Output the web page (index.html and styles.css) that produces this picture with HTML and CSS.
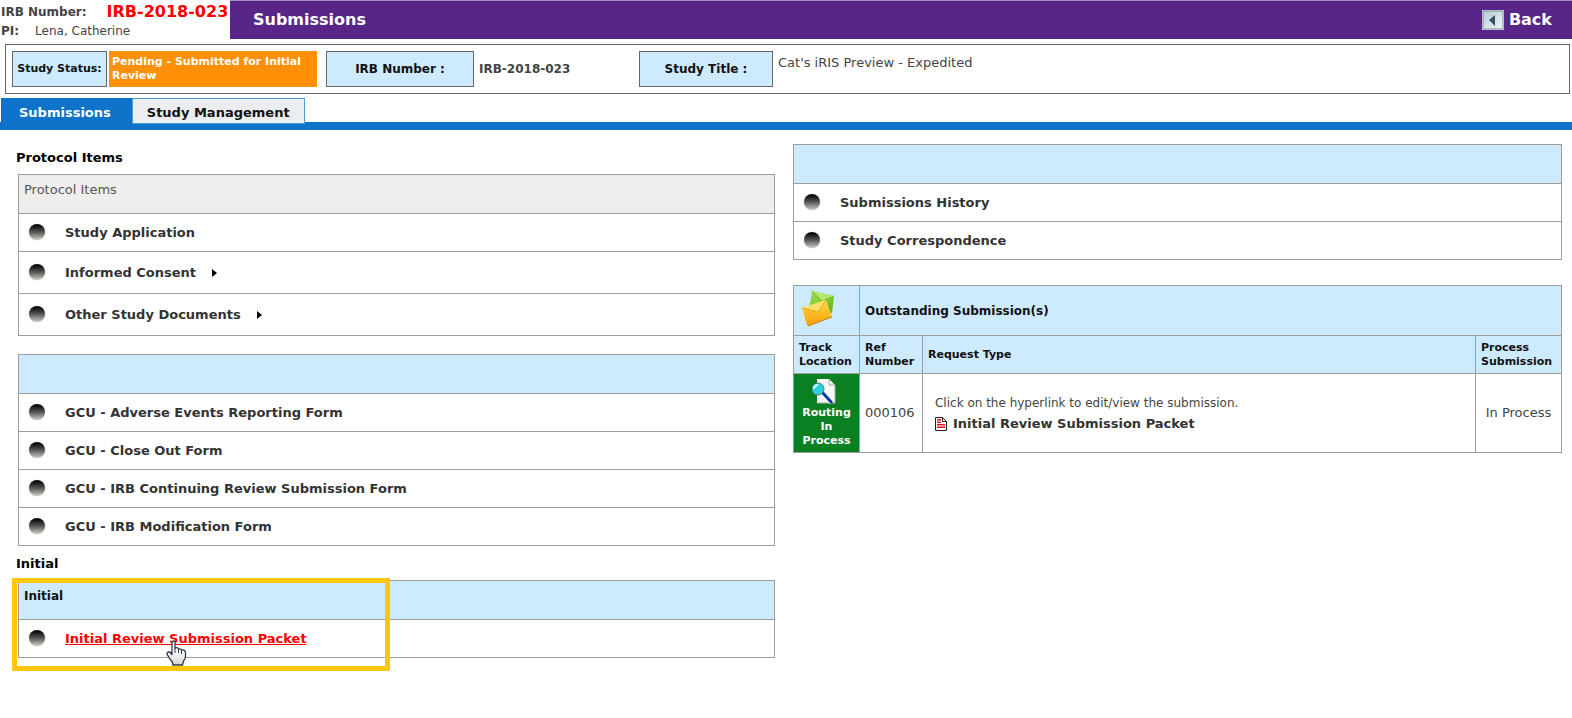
FILE: index.html
```html
<!DOCTYPE html>
<html lang="en">
<head>
    <meta charset="UTF-8">
    <meta name="viewport" content="width=device-width, initial-scale=1.0">
    <title>Submissions</title>
    <link rel="stylesheet" href="styles.css">
</head>
<body>
    <header class="top">
        <div class="study-id">
            <div class="id-row"><b>IRB Number:</b><span class="irb">IRB-2018-023</span></div>
            <div class="pi-row"><b>PI:</b><span>Lena, Catherine</span></div>
        </div>
        <div class="title-bar">
            <h1>Submissions</h1>
            <a href="#" class="back">
                <svg width="22" height="20" viewBox="0 0 22 20">
                    <defs>
                        <linearGradient id="btn" x1="0" y1="0" x2="1" y2="1">
                            <stop offset="0" stop-color="#b5cbd3"/>
                            <stop offset="1" stop-color="#eff8f8"/>
                        </linearGradient>
                    </defs>
                    <rect x="0" y="0" width="22" height="20" fill="#f2f2f2"/>
                    <rect x="1" y="1" width="20" height="18" fill="url(#btn)" stroke="#7c8790"/>
                    <path d="M13 5v11L7 10z" fill="#34506a"/>
                </svg>
                Back
            </a>
        </div>
    </header>

    <section class="info">
        <div class="label status-label">Study Status:</div>
        <div class="status">Pending - Submitted for Initial Review</div>
        <div class="label number-label">IRB Number :</div>
        <div class="number">IRB-2018-023</div>
        <div class="label title-label">Study Title :</div>
        <div class="study-title">Cat's iRIS Preview - Expedited</div>
    </section>

    <nav class="tabs">
        <a href="#" class="tab active">Submissions</a>
        <a href="#" class="tab">Study Management</a>
    </nav>

    <main class="columns">
        <div class="left">
            <h2>Protocol Items</h2>
            <ul class="panel">
                <li class="head gray">Protocol Items</li>
                <li><span class="dot"></span><a href="#">Study Application</a></li>
                <li class="tall"><span class="dot"></span><a href="#">Informed Consent<i class="arrow"></i></a></li>
                <li class="tall"><span class="dot"></span><a href="#">Other Study Documents<i class="arrow"></i></a></li>
            </ul>

            <ul class="panel forms">
                <li class="head"></li>
                <li><span class="dot"></span><a href="#">GCU - Adverse Events Reporting Form</a></li>
                <li><span class="dot"></span><a href="#">GCU - Close Out Form</a></li>
                <li><span class="dot"></span><a href="#">GCU - IRB Continuing Review Submission Form</a></li>
                <li><span class="dot"></span><a href="#">GCU - IRB Modification Form</a></li>
            </ul>

            <h2 class="initial-title">Initial</h2>
            <div class="initial">
                <ul class="panel">
                    <li class="head">Initial</li>
                    <li><span class="dot"></span><a href="#" class="hot">Initial Review Submission Packet</a></li>
                </ul>
                <div class="highlight"></div>
                <svg class="cursor" width="21" height="26" viewBox="0 0 21 26">
                    <defs>
                        <linearGradient id="hand" x1="0" y1="0" x2="0" y2="1">
                            <stop offset="0.4" stop-color="#fff"/>
                            <stop offset="1" stop-color="#d4d4d4"/>
                        </linearGradient>
                    </defs>
                    <path d="M6 15V2.500Q6 1 7.500 1T9 2.500V8q3-1 3.500 1 2.500-.5 3 1 3-.5 4 2v4q0 3-2 5l-1 4H7q0-3-3-6l-3-5q0-2 2-2 2 0 3 3z" fill="url(#hand)" stroke="#333845" stroke-width="1.300"/>
                    <path d="M9 8v5M12.500 9v4M15.500 10v4" stroke="#333845" fill="none"/>
                </svg>
            </div>
        </div>

        <div class="right">
            <ul class="panel">
                <li class="head"></li>
                <li><span class="dot"></span><a href="#">Submissions History</a></li>
                <li><span class="dot"></span><a href="#">Study Correspondence</a></li>
            </ul>

            <table class="outstanding">
                <tr class="caption-row">
                    <th class="mail">
                        <svg width="34" height="38" viewBox="0 0 34 38">
                            <defs>
                                <linearGradient id="green" x1="0" y1="0" x2="1" y2="1">
                                    <stop offset="0" stop-color="#a5df55"/>
                                    <stop offset="1" stop-color="#5cb51c"/>
                                </linearGradient>
                                <linearGradient id="gold" x1="0" y1="0" x2="0" y2="1">
                                    <stop offset="0" stop-color="#ffdc45"/>
                                    <stop offset="1" stop-color="#f99c08"/>
                                </linearGradient>
                            </defs>
                            <path d="M11 1l22 5-2 17L8 19z" fill="url(#green)"/>
                            <path d="M11 1l10 10L33 6z" fill="#b4ea6c"/>
                            <path d="M11 1l10 10L33 6" fill="none" stroke="#72bd35"/>
                            <path d="M1 18l23-8q1 0 1.500 1L31 27 8 36q-1 0-2-1z" fill="url(#gold)"/>
                            <path d="M1 18l16 4 8-12z" fill="#ffe168"/>
                            <path d="M1 18l16 4 8-12" fill="none" stroke="#e0a51c"/>
                            <path d="M7 36l24-9" stroke="#b98a20" fill="none"/>
                        </svg>
                    </th>
                    <th colspan="3" class="caption">Outstanding Submission(s)</th>
                </tr>
                <tr class="names">
                    <th class="col-track">Track Location</th>
                    <th class="col-ref">Ref Number</th>
                    <th>Request Type</th>
                    <th class="col-process">Process Submission</th>
                </tr>
                <tr class="entry">
                    <td class="routing">
                        <svg width="32" height="26" viewBox="0 0 32 26">
                            <path d="M7 1h12l6 6v18H7z" fill="#f7f7f7"/>
                            <path d="M19 1v6h6M25 7v18H7" fill="none" stroke="#a9a9a9"/>
                            <path d="M12 14l10 11" stroke="#fff" stroke-width="5"/>
                            <path d="M12 14l10 11" stroke="#0b3c9c" stroke-width="3"/>
                            <circle cx="8" cy="11" r="6" fill="#2fd0de" stroke="#4c7f88" stroke-width="1"/>
                            <path d="M4 11q0-4 4-4" fill="none" stroke="#d5ffff" stroke-width="2"/>
                        </svg>
                        <a href="#">Routing In Process</a>
                    </td>
                    <td class="ref">000106</td>
                    <td class="request">
                        <p>Click on the hyperlink to edit/view the submission.</p>
                        <a href="#">
                            <svg width="12" height="14" viewBox="0 0 12 14">
                                <path d="M.5 .5h7l4 4v9H.5z" fill="#fff" stroke="#222"/>
                                <path d="M7.500 .5v4h4" fill="none" stroke="#222"/>
                                <path d="M2 2h4v1.500H2zM2 4.500h4V6H2zM2 7h8v1.500H2zM2 9.500h8V11H2z" fill="#f01020"/>
                            </svg>
                            Initial Review Submission Packet
                        </a>
                    </td>
                    <td class="process">In Process</td>
                </tr>
            </table>
        </div>
    </main>
</body>
</html>
```
FILE: styles.css
```css
* {
    box-sizing: border-box;
}

body {
    margin: 0;
    font-family: Verdana, "DejaVu Sans", sans-serif;
    font-size: 13px;
    line-height: 14px;
    color: #444;
    background: #fff;
}

a {
    color: inherit;
    text-decoration: none;
}

/* Header */
.top {
    display: flex;
    height: 39px;
}

.study-id {
    width: 230px;
    padding-left: 1px;
    font-size: 12px;
    white-space: nowrap;
}

.id-row {
    display: flex;
    align-items: center;
    gap: 20px;
    height: 24px;
}

.irb {
    font-size: 16px;
    font-weight: bold;
    color: #f00;
}

.pi-row {
    display: flex;
    gap: 16px;
}

.title-bar {
    flex: 1;
    display: flex;
    align-items: center;
    justify-content: space-between;
    padding: 0 20px 0 23px;
    background: #582589;
    border-top: 1px solid #a58bc0;
    color: #fff;
}

h1 {
    margin: 0;
    font-size: 16px;
}

.back {
    display: flex;
    align-items: center;
    gap: 5px;
    font-size: 16px;
    font-weight: bold;
}

/* Study info */
.info {
    display: flex;
    align-items: center;
    height: 50px;
    margin: 5px 2px 0 5px;
    padding: 0 6px;
    border: 1px solid #666;
    font-size: 11px;
}

.label {
    display: flex;
    align-items: center;
    justify-content: center;
    height: 36px;
    background: #cdeafe;
    border: 1px solid #666;
    color: #111;
    font-weight: bold;
    white-space: nowrap;
}

.status-label {
    width: 95px;
}

.status {
    width: 208px;
    height: 36px;
    margin: 0 9px 0 2px;
    padding: 4px 3px;
    background: #ff9005;
    color: #fff;
    font-weight: bold;
}

.number-label {
    width: 148px;
    font-size: 12px;
}

.number {
    width: 165px;
    padding-left: 5px;
    font-size: 12px;
    font-weight: bold;
}

.title-label {
    width: 134px;
    font-size: 12px;
}

.study-title {
    align-self: flex-start;
    padding: 11px 5px;
    font-size: 13px;
}

/* Tabs */
.tabs {
    display: flex;
    height: 32px;
    margin-top: 4px;
    padding-left: 1px;
    border-bottom: 8px solid #0f73c9;
}

.tab {
    margin-bottom: -2px;
    padding: 7px 14px;
    background: #ecedf0;
    border: 1px solid #4c9bd9;
    color: #111;
    font-weight: bold;
}

.tab.active {
    padding: 7px 20px 7px 17px;
    background: #0f73c9;
    border-color: #0f73c9;
    color: #fff;
}

/* Panels */
.columns {
    display: grid;
    grid-template-columns: 63fr 64fr;
    gap: 18px;
    padding: 14px 10px 40px 18px;
}

h2 {
    margin: 0 0 9px -2px;
    padding-top: 7px;
    font-size: 13px;
    color: #000;
}

.panel {
    margin: 0;
    padding: 0;
    list-style: none;
    border: 1px solid #a09d99;
    color: #333;
    font-weight: bold;
}

.panel li {
    display: flex;
    align-items: center;
    height: 38px;
    padding-left: 10px;
    border-top: 1px solid #a09d99;
}

.panel .tall {
    height: 42px;
}

.panel .head {
    align-items: flex-start;
    height: 38px;
    padding: 8px 5px;
    border-top: none;
    background: #cdeafe;
    color: #111;
    font-size: 12px;
}

.panel .gray {
    background: #efeeec;
    color: #555;
    font-size: 13px;
    font-weight: normal;
}

.dot {
    width: 16px;
    height: 16px;
    margin: 0 20px 2px 0;
    border-radius: 50%;
    background: linear-gradient(#0c0c0c 10%, #555 50%, #c5c0bb 95%);
    box-shadow: 0 0 1px #999;
}

.arrow {
    display: inline-block;
    margin-left: 16px;
    border: 4px solid transparent;
    border-left: 5px solid #000;
    border-right: none;
}

.forms {
    margin-top: 18px;
}

.initial-title {
    padding-top: 11px;
}

.initial {
    position: relative;
}

.hot {
    color: #f00;
    text-decoration: underline;
}

.highlight {
    position: absolute;
    top: -2px;
    left: -6px;
    width: 378px;
    height: 93px;
    border: 5px solid #ffc60b;
}

.cursor {
    position: absolute;
    top: 60px;
    left: 148px;
}

/* Outstanding submissions */
.outstanding {
    width: 100%;
    margin-top: 25px;
    border-collapse: collapse;
    font-size: 13px;
}

.outstanding th,
.outstanding td {
    padding: 0 5px;
    border: 1px solid #a09d99;
    text-align: left;
}

.outstanding th {
    background: #cdeafe;
    color: #111;
    font-size: 11px;
}

.outstanding .caption {
    font-size: 12px;
}

.outstanding .mail {
    padding: 0 7px;
}

.mail svg {
    display: block;
    margin-bottom: 4px;
}

.caption-row {
    height: 50px;
}

.names {
    height: 38px;
}

.entry {
    height: 79px;
}

.col-track {
    width: 66px;
}

.col-ref {
    width: 63px;
}

.col-process {
    width: 86px;
}

.outstanding .routing {
    background: #0b8023;
    color: #fff;
    font-size: 11px;
    font-weight: bold;
    text-align: center;
}

.routing svg {
    display: block;
    margin: 0 auto 2px;
}

.routing a {
    display: block;
}

.outstanding .request {
    padding: 0 12px;
}

.request p {
    margin: 0 0 7px;
    font-size: 12px;
}

.request a {
    display: flex;
    gap: 6px;
    color: #333;
    font-weight: bold;
}

.outstanding .process {
    text-align: center;
}
```
